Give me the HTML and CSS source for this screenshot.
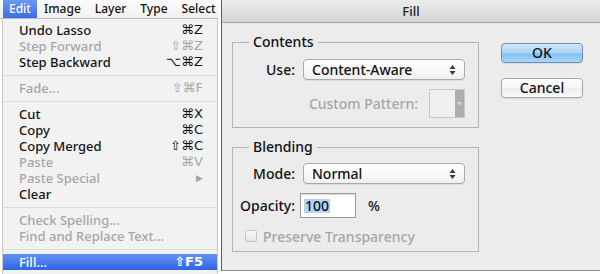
FILE: index.html
```html
<!DOCTYPE html>
<html lang="en">
<head>
<meta charset="utf-8">
<title>Edit menu and Fill dialog</title>
<link rel="stylesheet" href="styles.css">
</head>
<body>
<div class="screen">
  <div class="menu">
    <div class="menubar">
      <span class="mb-item active">Edit</span>
      <span class="mb-item">Image</span>
      <span class="mb-item">Layer</span>
      <span class="mb-item">Type</span>
      <span class="mb-item">Select</span>
    </div>
    <ul class="dropdown">
      <li class="item"><span>Undo Lasso</span><span class="key">⌘Z</span></li>
      <li class="item disabled"><span>Step Forward</span><span class="key">⇧⌘Z</span></li>
      <li class="item"><span>Step Backward</span><span class="key">⌥⌘Z</span></li>
      <li class="sep"></li>
      <li class="item disabled"><span>Fade...</span><span class="key">⇧⌘F</span></li>
      <li class="sep"></li>
      <li class="item"><span>Cut</span><span class="key">⌘X</span></li>
      <li class="item"><span>Copy</span><span class="key">⌘C</span></li>
      <li class="item"><span>Copy Merged</span><span class="key">⇧⌘C</span></li>
      <li class="item disabled"><span>Paste</span><span class="key">⌘V</span></li>
      <li class="item disabled"><span>Paste Special</span><span class="key sub">▶</span></li>
      <li class="item"><span>Clear</span></li>
      <li class="sep"></li>
      <li class="item disabled"><span>Check Spelling...</span></li>
      <li class="item disabled"><span>Find and Replace Text...</span></li>
      <li class="sep"></li>
      <li class="item selected"><span>Fill...</span><span class="key bold">⇧F5</span></li>
    </ul>
  </div>

  <div class="dialog">
    <div class="titlebar">Fill</div>
    <div class="dialog-body">
      <div class="groups">
        <fieldset class="group">
          <legend>Contents</legend>
          <div class="row use-row">
            <span class="label">Use:</span>
            <div class="select">
              <span>Content-Aware</span>
              <svg class="updown" width="7" height="12" viewBox="0 0 7 12"><polygon points="0.5,5 3.5,1 6.5,5" fill="#3a3a3a"/><polygon points="0.5,7 3.5,11 6.5,7" fill="#3a3a3a"/></svg>
            </div>
          </div>
          <div class="row pattern-row">
            <span class="pattern-label">Custom Pattern:</span>
            <div class="swatch">
              <div class="swatch-fill"></div>
              <div class="swatch-btn"><svg width="5" height="4" viewBox="0 0 5 4"><polygon points="0,0 5,0 2.5,4" fill="#d6d6d6"/></svg></div>
            </div>
          </div>
        </fieldset>

        <fieldset class="group">
          <legend>Blending</legend>
          <div class="row mode-row">
            <span class="label">Mode:</span>
            <div class="select">
              <span>Normal</span>
              <svg class="updown" width="7" height="12" viewBox="0 0 7 12"><polygon points="0.5,5 3.5,1 6.5,5" fill="#3a3a3a"/><polygon points="0.5,7 3.5,11 6.5,7" fill="#3a3a3a"/></svg>
            </div>
          </div>
          <div class="row opacity-row">
            <span class="label">Opacity:</span>
            <div class="input"><span class="sel-text">100</span></div>
            <span class="percent">%</span>
          </div>
          <div class="row check-row">
            <span class="checkbox"></span>
            <span class="check-label">Preserve Transparency</span>
          </div>
        </fieldset>
      </div>

      <div class="buttons">
        <div class="btn primary">OK</div>
        <div class="btn">Cancel</div>
      </div>
    </div>
  </div>
</div>
</body>
</html>
```

FILE: styles.css
```css
* { box-sizing: border-box; }

body {
  margin: 0;
  background: #ffffff;
  font-family: "Noto Sans", "DejaVu Sans", sans-serif;
}

.screen {
  display: flex;
  align-items: flex-start;
  width: 600px;
  height: 274px;
  overflow: hidden;
  background: #ffffff;
}

/* ---------- Menu ---------- */
.menu {
  width: 218px;
  height: 274px;
  flex: none;
  display: flex;
  flex-direction: column;
}

.menubar {
  height: 19px;
  flex: none;
  display: flex;
  padding-left: 3px;
  background: linear-gradient(#fbfbfb, #f1f1f1);
  border-bottom: 1px solid #bdbdbd;
  overflow: hidden;
  white-space: nowrap;
  font-size: 12px;
  font-weight: 500;
  line-height: 18px;
  color: #111;
}

.mb-item { padding: 0 7px; }

.mb-item.active {
  padding: 0 6px 0 6px;
  background: linear-gradient(#6b97f4, #3a6de8);
  color: #fff;
}

.dropdown {
  list-style: none;
  margin: 0 0 0 2px;
  padding: 3px 0 4px;
  flex: 1;
  background: #f2f2f2;
  border-left: 1px solid #c9c9c9;
  border-right: 1px solid #c9c9c9;
  font-size: 13px;
  font-weight: 500;
  line-height: 16px;
  color: #141414;
}

.item {
  display: flex;
  justify-content: space-between;
  align-items: center;
  height: 16px;
  padding: 0 14px 0 16px;
  white-space: nowrap;
}

.item.disabled { color: #a6a6a6; }

.item.selected {
  background: linear-gradient(#6393f5, #2f63e4);
  color: #fff;
}

.key {
  font-family: "DejaVu Sans", sans-serif;
  font-size: 13px;
  font-weight: normal;
}

.key.sub { font-size: 9px; }
.key.bold { font-weight: bold; }

.sep {
  height: 10px;
  display: flex;
  align-items: center;
}

.sep::before {
  content: "";
  flex: 1;
  height: 1px;
  background: #dcdcdc;
}

/* ---------- Dialog ---------- */
.dialog {
  flex: 1;
  height: 271px;
  margin-left: 3px;
  display: flex;
  flex-direction: column;
  background: #ececec;
  border-left: 1px solid #5e5e5e;
  border-bottom: 1px solid #8e8e8e;
}

.titlebar {
  height: 23px;
  flex: none;
  text-align: center;
  font-size: 13px;
  font-weight: 500;
  line-height: 22px;
  color: #222;
  background: linear-gradient(#ececec, #d4d4d4);
  border-bottom: 1px solid #a4a4a4;
}

.dialog-body {
  flex: 1;
  display: flex;
  align-items: flex-start;
  padding: 10px 0 0 10px;
}

.groups {
  width: 247px;
  flex: none;
  display: flex;
  flex-direction: column;
  gap: 10px;
}

.group {
  margin: 0;
  min-width: 0;
  padding: 0 0 9px;
  border: 1px solid #b4b4b4;
}

.group + .group { padding-bottom: 7px; }

legend {
  margin-left: 16px;
  padding: 0 4px;
  font-size: 14px;
  font-weight: 500;
  line-height: 18px;
  color: #111;
}

.row {
  display: flex;
  align-items: center;
  font-size: 14px;
  font-weight: 500;
  color: #111;
}

.label {
  width: 62px;
  flex: none;
  text-align: right;
}

.use-row { margin-top: 8px; height: 21px; }
.mode-row { margin-top: 7px; height: 21px; }

.select {
  margin-left: 8px;
  width: 162px;
  height: 21px;
  display: flex;
  align-items: center;
  justify-content: space-between;
  padding: 0 8px 0 8px;
  border: 1px solid #a9a9a9;
  border-radius: 4px;
  background: linear-gradient(#ffffff, #f0f0f0);
  box-shadow: 0 1px 1px rgba(0, 0, 0, 0.08);
  font-size: 14px;
  line-height: 19px;
  color: #111;
}

.pattern-row {
  margin-top: 9px;
  height: 29px;
  justify-content: flex-end;
  padding-right: 13px;
}

.pattern-label {
  color: #a6a6a6;
  margin-right: 11px;
}

.swatch {
  width: 36px;
  height: 29px;
  display: flex;
  border: 1px solid #c8c8c8;
  background: #efefef;
}

.swatch-fill { flex: 1; }

.swatch-btn {
  width: 9px;
  display: flex;
  align-items: center;
  justify-content: center;
  background: #aeaeae;
}

.opacity-row { margin-top: 9px; height: 25px; }

.input {
  margin-left: 5px;
  width: 56px;
  height: 25px;
  display: flex;
  align-items: center;
  padding-left: 3px;
  background: #fff;
  border: 1px solid #9b9b9b;
  box-shadow: inset 0 1px 1px rgba(0, 0, 0, 0.15);
}

.sel-text {
  background: #b4d4fb;
  line-height: 14px;
  padding: 0 1px;
  color: #111;
}

.percent { margin-left: 12px; }

.check-row {
  margin-top: 10px;
  height: 16px;
  padding-left: 12px;
}

.checkbox {
  width: 12px;
  height: 12px;
  flex: none;
  border: 1px solid #c6c6c6;
  border-radius: 2px;
  background: linear-gradient(#f9f9f9, #e6e6e6);
}

.check-label {
  margin-left: 6px;
  color: #a6a6a6;
}

.buttons {
  margin-left: 22px;
  margin-top: 10px;
  width: 82px;
  flex: none;
  display: flex;
  flex-direction: column;
  gap: 15px;
}

.btn {
  height: 20px;
  border-radius: 4px;
  border: 1px solid #a6a6a6;
  background: linear-gradient(#ffffff 0%, #f6f6f6 50%, #ececec 55%, #fafafa 100%);
  box-shadow: 0 1px 1px rgba(0, 0, 0, 0.08);
  font-size: 14px;
  font-weight: 500;
  line-height: 18px;
  text-align: center;
  color: #111;
}

.btn.primary {
  border-color: #6f8fb8;
  background: linear-gradient(#d3e9fb 0%, #a7d1f5 50%, #82c0f1 55%, #aad7f8 100%);
}
```
